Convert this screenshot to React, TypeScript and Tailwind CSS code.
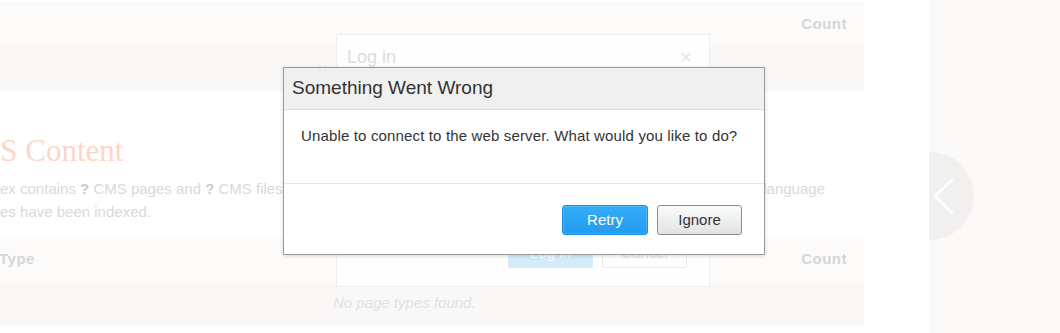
export default function App() {
    return (
        <div className="relative w-[1060px] h-[333px] overflow-hidden bg-white font-['Liberation_Sans',Arial,sans-serif] flex">
            <div className="w-[864px] shrink-0 pt-[2px]">
                <div className="h-[44px] bg-[#fcfbfa] flex items-center justify-end pr-[17px]">
                    <span className="text-[15px] font-bold tracking-[0.5px] text-[#d6d6d6]">Count</span>
                </div>
                <div className="h-[44px] bg-[#f9f8f7] pl-[318px] pt-[12px]">
                    <span className="text-[12px] text-[#d8d8d8]">Name</span>
                </div>

                <h1 className="mt-[43px] ml-[-48px] text-[31px] leading-[36px] text-[#fed5c9] font-['Liberation_Serif',serif] whitespace-nowrap">
                    CMS Content
                </h1>
                <div className="mt-[8px] text-[15px] leading-[23px] text-[#d9d9d9] whitespace-nowrap">
                    <div className="flex justify-between pr-[39px]">
                        <p className="ml-[-20px]">
                            index contains <b className="text-[#cccccc]">?</b> CMS pages and <b className="text-[#cccccc]">?</b> CMS files
                        </p>
                        <p>
                            in <b className="text-[#cccccc]">?</b> language
                        </p>
                    </div>
                    <p className="ml-[-25px]">pages have been indexed.</p>
                </div>

                <div className="mt-[14px] h-[45px] bg-[#fcfbfa] flex items-center justify-between pr-[17px]">
                    <span className="text-[15px] font-bold tracking-[0.5px] text-[#d6d6d6] ml-[-1px]">Type</span>
                    <span className="text-[15px] font-bold tracking-[0.5px] text-[#d6d6d6]">Count</span>
                </div>
                <div className="h-[43px] bg-[#f9f8f7] flex items-center pl-[333px]">
                    <span className="text-[15px] italic text-[#e2e2e2]">No page types found.</span>
                </div>
            </div>

            <div className="w-[65px] shrink-0" />

            <div className="relative flex-1 bg-[#fbfaf9] overflow-hidden">
                <div className="absolute left-[-43px] top-[152px] w-[88px] h-[88px] rounded-full bg-[#f1f0ef] flex items-center justify-center">
                    <svg width="88" height="88" viewBox="0 0 88 88" fill="none">
                        <path d="M66 28 L49 44 L66 61" stroke="#ffffff" strokeWidth="2.5" strokeLinecap="round" strokeLinejoin="round" />
                    </svg>
                </div>
            </div>

            {/* login modal behind the error */}
            <div className="absolute left-[336px] top-[34px] w-[374px] h-[253px] bg-[#fefefe] border border-[#eeeeee] flex flex-col">
                <div className="flex items-center justify-between pl-[10px] pr-[17px] pt-[7px]">
                    <span className="text-[18px] text-[#dcdcdc]">Log in</span>
                    <span className="text-[20px] text-[#e4e4e4]">×</span>
                </div>
                <div className="mt-auto flex justify-end gap-[9px] pr-[22px] pb-[18px]">
                    <div className="w-[85px] h-[29px] rounded-[3px] bg-[#d4ebfb] flex items-center justify-center text-[15px] text-white">Log in</div>
                    <div className="w-[85px] h-[29px] rounded-[3px] border border-[#e8e8e8] flex items-center justify-center text-[15px] text-[#e0e0e0]">Cancel</div>
                </div>
            </div>

            {/* error dialog */}
            <div className="absolute left-[283px] top-[67px] w-[482px] h-[188px] bg-white border border-[#9a9a9a] shadow-[0_1px_4px_rgba(0,0,0,0.15)] flex flex-col">
                <div className="h-[42px] bg-[#f0f0f0] border-b border-[#dcdcdc] flex items-center pl-[8px]">
                    <h2 className="text-[19px] text-[#333333]">Something Went Wrong</h2>
                </div>
                <div className="h-[74px] border-b border-[#e5e5e5] pl-[17px] pt-[15px]">
                    <p className="text-[15px] tracking-[0.15px] text-[#333333]">Unable to connect to the web server. What would you like to do?</p>
                </div>
                <div className="flex justify-end gap-[9px] pr-[22px] pt-[21px]">
                    <button className="w-[86px] h-[30px] rounded-[3px] border border-[#1e90e8] bg-[linear-gradient(#35acf7,#229cf0)] shadow-[inset_0_0_0_1px_rgba(255,255,255,0.15)] text-[15px] text-white">
                        Retry
                    </button>
                    <button className="w-[85px] h-[30px] rounded-[3px] border border-[#8c8c8c] bg-[linear-gradient(#fbfbfb,#e1e2e4)] text-[15px] text-[#333333]">
                        Ignore
                    </button>
                </div>
            </div>
        </div>
    );
}
